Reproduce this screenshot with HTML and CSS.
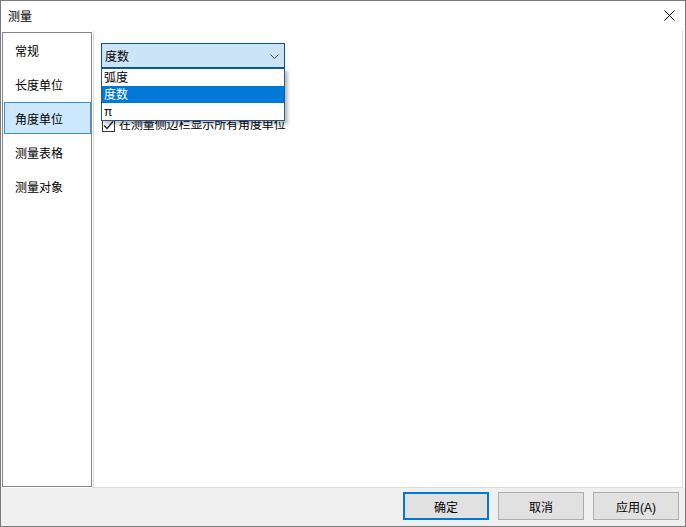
FILE: index.html
```html
<!DOCTYPE html>
<html>
<head>
    <link rel="stylesheet" href="styles.css">
</head>
<body>
    <div class="window">
        <header class="titlebar">
            <span class="title">测量</span>
            <button class="close" id="close">
                <svg width="11" height="11" viewBox="0 0 11 11"><path d="M0.5 0.5L10.5 10.5M10.5 0.5L0.5 10.5" stroke="#000" stroke-width="1" fill="none"/></svg>
            </button>
        </header>

        <div class="main">
            <!-- Category list -->
            <ul class="nav">
                <li class="nav-item">常规</li>
                <li class="nav-item">长度单位</li>
                <li class="nav-item selected">角度单位</li>
                <li class="nav-item">测量表格</li>
                <li class="nav-item">测量对象</li>
            </ul>

            <!-- Settings page -->
            <div class="panel">
                <div class="combo-wrap">
                    <div class="combo">
                        <span>度数</span>
                        <svg class="chevron" width="9" height="5" viewBox="0 0 9 5"><path d="M0.5 0.5L4.5 4.5L8.5 0.5" stroke="#444" stroke-width="1" fill="none"/></svg>
                    </div>
                    <ul class="dropdown">
                        <li class="option">弧度</li>
                        <li class="option active">度数</li>
                        <li class="option">π</li>
                    </ul>
                </div>
                <label class="check">
                    <span class="box">
                        <svg width="11" height="11" viewBox="0 0 11 11"><path d="M1 5.5L4 8.5L10 1.5" stroke="#222" stroke-width="1.2" fill="none"/></svg>
                    </span>
                    在测量侧边栏显示所有角度单位
                </label>
            </div>
        </div>

        <footer class="footer">
            <button class="button default">确定</button>
            <button class="button">取消</button>
            <button class="button">应用(A)</button>
        </footer>
    </div>
</body>
</html>
```

FILE: styles.css
```css
body {
    margin: 0;
    padding: 0;
    font-family: 'Liberation Sans', 'Noto Sans CJK SC', sans-serif;
    font-size: 12px;
    color: #000;
    background-color: white;
    overflow: hidden;
}

ul {
    list-style: none;
    margin: 0;
    padding: 0;
}

.window {
    width: 686px;
    height: 527px;
    box-sizing: border-box;
    border: 1px solid #7a7a7a;
    display: flex;
    flex-direction: column;
    background-color: #f0f0f0;
}

.titlebar {
    height: 30px;
    flex: none;
    background-color: white;
    display: flex;
    justify-content: space-between;
    align-items: center;
}

.title {
    margin-left: 7px;
    line-height: 16px;
    margin-top: 1px;
}

.close {
    all: unset;
    width: 11px;
    height: 11px;
    margin-right: 10px;
    margin-top: -1px;
    display: flex;
}

.main {
    height: 457px;
    flex: none;
    display: flex;
    background-color: white;
    padding: 0 2px 0 1px;
}

.nav {
    width: 90px;
    height: 455px;
    box-sizing: border-box;
    margin-top: 1px;
    border: 1px solid #828790;
    padding: 0 0 0 1px;
    display: flex;
    flex-direction: column;
}

.nav-item {
    height: 32px;
    margin: 1px 0;
    box-sizing: border-box;
    padding-left: 10px;
    display: flex;
    align-items: center;
    border: 1px solid transparent;
}

.nav-item.selected {
    background-color: #cce8ff;
    border-color: #3c90d8;
}

.panel {
    width: 590px;
    margin-left: 1px;
    box-sizing: border-box;
    border: 1px solid #dcdcdc;
    border-top: none;
    padding: 12px 0 0 7px;
}

.combo-wrap {
    position: relative;
    width: 184px;
}

.combo {
    height: 25px;
    box-sizing: border-box;
    border: 1px solid #005499;
    background-color: #cce4f7;
    padding: 0 5px 0 3px;
    display: flex;
    justify-content: space-between;
    align-items: center;
}

.chevron {
    margin-top: 1px;
}

.dropdown {
    position: absolute;
    top: 25px;
    left: 0;
    width: 184px;
    box-sizing: border-box;
    border: 1px solid #1e5a96;
    background-color: white;
    box-shadow: 3px 3px 3px rgba(0, 0, 0, 0.25);
}

.option {
    height: 17px;
    line-height: 19px;
    overflow: hidden;
    padding-left: 2px;
}

.option.active {
    background-color: #0078d7;
    color: white;
}

.check {
    margin-top: 51px;
    margin-left: 1px;
    display: flex;
    align-items: center;
    gap: 4px;
    line-height: 13px;
    letter-spacing: -0.1px;
}

.box {
    width: 13px;
    height: 13px;
    box-sizing: border-box;
    border: 1px solid #333;
    background-color: white;
    display: flex;
    align-items: center;
    justify-content: center;
}

.footer {
    flex: 1;
    display: flex;
    justify-content: flex-end;
    align-items: flex-start;
    gap: 9px;
    padding: 4px 6px 0 0;
}

.button {
    width: 86px;
    height: 28px;
    box-sizing: border-box;
    border: 1px solid #adadad;
    background-color: #e1e1e1;
    font-family: inherit;
    font-size: 12px;
    color: #000;
    padding: 0;
}

.button.default {
    border: 2px solid #0078d7;
}
```
